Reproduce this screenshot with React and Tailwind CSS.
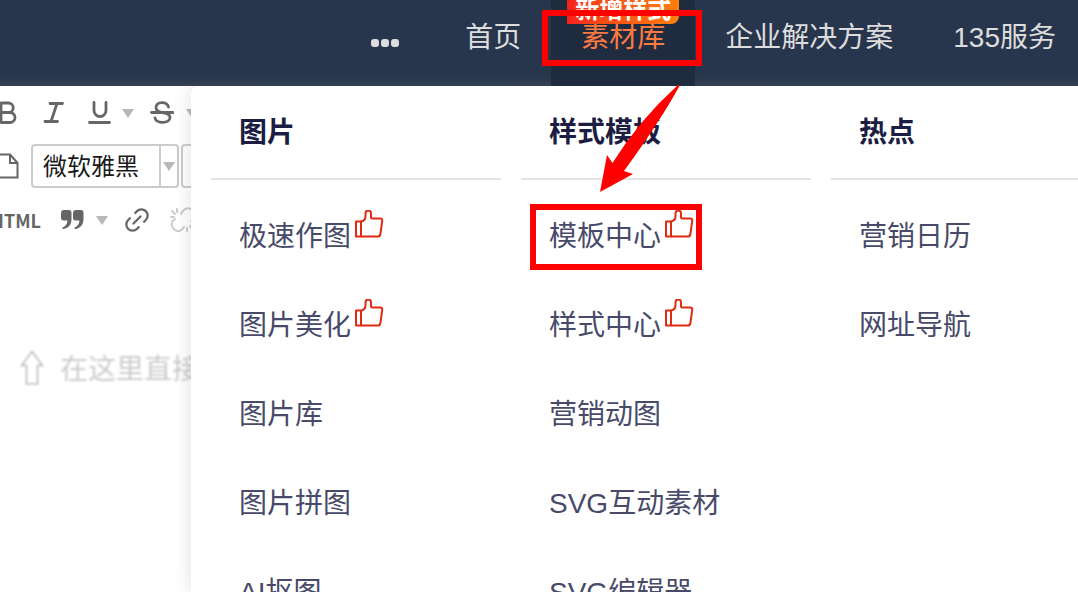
import React, { useState } from 'react';
import { Link2 } from 'lucide-react';

const navItems = [
  { label: '首页' },
  { label: '素材库', badge: '新增样式', active: true },
  { label: '企业解决方案' },
  { label: '135服务' },
];

const menuColumns = [
  {
    title: '图片',
    items: [
      { label: '极速作图', hot: true },
      { label: '图片美化', hot: true },
      { label: '图片库' },
      { label: '图片拼图' },
      { label: 'AI抠图' },
    ],
  },
  {
    title: '样式模板',
    items: [
      { label: '模板中心', hot: true },
      { label: '样式中心', hot: true },
      { label: '营销动图' },
      { label: 'SVG互动素材' },
      { label: 'SVG编辑器' },
    ],
  },
  {
    title: '热点',
    items: [{ label: '营销日历' }, { label: '网址导航' }],
  },
];

const formatIcons = {
  bold: 'M7 2H14.5A4.700 4.700 0 0 1 14.5 11.500H7ZM7 11.500H16A5 5 0 0 1 16 21.500H7Z',
  italic: 'M8 2.500H20.500M3 20.500H15.500M15 2.500L9 20.500',
  underline: 'M6 1.500V9.500A6 6 0 0 0 18 9.500V1.500M1.500 21.500H21.500',
  strike: 'M18.500 6C17 0 6 0 6 6.500C6 10 9 11 12 11.500C16 12 20 13 20 16.500C20 23 6 23 5 17M1.500 11.500H23',
};

function FormatIcon({ name }) {
  return (
    <svg width="24" height="24" viewBox="0 0 24 24" fill="none" stroke="#666" strokeWidth="2.8" strokeLinecap="round" strokeLinejoin="round">
      <path d={formatIcons[name]} />
    </svg>
  );
}

function ThumbIcon() {
  return (
    <svg className="mb-6 ml-1 shrink-0" width="29" height="30" viewBox="0 0 29 30" fill="none" stroke="#e02a12" strokeWidth="2" strokeLinejoin="round">
      <path d="M1 11.500H6V26.500H1Z" />
      <path d="M6 11.500C9.500 11 10.500 9 10.500 6V3.500C10.500 -.5 16 -.5 16 3.500V7Q16 8.500 17.500 8.500H25.500Q27.500 8.500 27.200 11L25.400 24Q25 26.500 23 26.500H6" />
    </svg>
  );
}

function Caret() {
  return (
    <svg className="shrink-0" width="12" height="9" viewBox="0 0 12 9" fill="#b8b8b8">
      <path d="M0 0H12L6 9Z" />
    </svg>
  );
}

function PageIcon() {
  return (
    <svg className="shrink-0" width="24" height="26" viewBox="0 0 24 26" fill="none" stroke="#666" strokeWidth="2">
      <path d="M1 1.5H15L22.500 10V24.500H1Z" />
      <path d="M15 1.5V10H22.500" />
    </svg>
  );
}

function QuoteIcon() {
  const mark = 'M3 0H8Q10.500 0 10.500 3V9C10.500 15 7 18.500 2 19Q.5 18.500 2 17.200Q6 15.500 6.500 10.500H3Q0 10.500 0 8V3Q0 0 3 0Z';
  return (
    <svg width="23" height="20" viewBox="0 0 23 20" fill="#666">
      <path d={mark} />
      <path d={mark} transform="translate(12 0)" />
    </svg>
  );
}

function UnlinkIcon() {
  return (
    <svg width="28" height="28" viewBox="0 0 28 28" fill="none" stroke="#ccc" strokeWidth="2" strokeLinecap="round">
      <path d="M5 13C0 16 1 21 5 24C8 26 12 25 14 21" />
      <path d="M11 8C14 2 18 1 22 4C26 7 25 12 21 15" />
      <path d="M7 3V6M2 5L5 8M1 11H4M17 22V25M20 20L23 23M22 17H25" />
    </svg>
  );
}

function ToolButton({ label, children }) {
  return (
    <button type="button" aria-label={label} className="flex shrink-0 items-center text-[#666]">
      {children}
    </button>
  );
}

function Header() {
  return (
    <header className="h-[86px] overflow-hidden bg-[#28364d]">
      <nav className="-mr-2 flex h-full justify-end bg-linear-to-b from-transparent from-90% to-[#344152]">
        <button type="button" aria-label="更多" className="mr-9 flex items-center gap-[2px]">
          <span className="h-2 w-2 rounded-[3px] bg-[#ddd]" />
          <span className="h-2 w-2 rounded-[3px] bg-[#ddd]" />
          <span className="h-2 w-2 rounded-[3px] bg-[#ddd]" />
        </button>
        {navItems.map((item) => (
          <a
            key={item.label}
            href="#"
            className={
              item.active
                ? 'relative flex shrink-0 items-center bg-[#1f2c40] px-[30px] pb-[10px] text-[#ff7a40]'
                : 'flex shrink-0 items-center px-[30px] pb-[10px] text-[#ddd]'
            }
          >
            {item.label}
            {item.badge && (
              <span className="absolute -top-2 left-4 flex h-8 items-center rounded-br-lg bg-linear-to-r from-[#f5201a] to-[#ff7f0c] px-2 pt-1 text-2xl font-bold whitespace-nowrap text-white">
                {item.badge}
              </span>
            )}
          </a>
        ))}
      </nav>
    </header>
  );
}

function Editor() {
  const [font, setFont] = useState('微软雅黑');

  return (
    <section>
      <div className="-ml-[6px] flex h-[54px] items-center">
        <ToolButton label="加粗"><FormatIcon name="bold" /></ToolButton>
        <div className="ml-6"><ToolButton label="斜体"><FormatIcon name="italic" /></ToolButton></div>
        <div className="ml-[22px] flex items-center gap-[10px]">
          <ToolButton label="下划线"><FormatIcon name="underline" /></ToolButton>
          <Caret />
        </div>
        <div className="ml-4 flex items-center gap-3">
          <ToolButton label="删除线"><FormatIcon name="strike" /></ToolButton>
          <Caret />
        </div>
      </div>

      <div className="-ml-[5px] flex h-[52px] items-center">
        <ToolButton label="新建"><PageIcon /></ToolButton>
        <div className="ml-3 flex h-11 w-[148px] shrink-0 items-center rounded-sm border-2 border-[#ccc]">
          <select
            aria-label="字体"
            value={font}
            onChange={(e) => setFont(e.target.value)}
            className="h-full w-[126px] appearance-none pt-[2px] pl-[10px] text-2xl text-[#1a1a1a]"
          >
            <option>微软雅黑</option>
            <option>宋体</option>
          </select>
          <span className="flex h-full flex-1 items-center justify-center border-l-2 border-[#ccc]">
            <Caret />
          </span>
        </div>
        <div className="ml-[2px] h-11 w-20 shrink-0 rounded-sm border-2 border-[#ccc]" />
      </div>

      <div className="-ml-[9px] flex h-14 items-center">
        <button type="button" className="flex w-[50px] shrink-0 justify-end font-['Noto_Sans_CJK_SC'] text-lg font-bold text-[#666]">HTML</button>
        <div className="ml-5 flex items-center gap-3">
          <ToolButton label="引用"><QuoteIcon /></ToolButton>
          <Caret />
        </div>
        <div className="ml-[14px]"><ToolButton label="链接"><Link2 size={30} strokeWidth={1.8} className="-rotate-45" /></ToolButton></div>
        <div className="ml-[18px]"><ToolButton label="取消链接"><UnlinkIcon /></ToolButton></div>
      </div>

      <div className="mt-[98px] ml-5 flex items-center gap-4 whitespace-nowrap text-[#ccc] blur-[1px]">
        <svg className="shrink-0" width="24" height="36" viewBox="0 0 24 36" fill="none" stroke="#bbb" strokeWidth="1.6">
          <path d="M12 1.500L22.500 15.500H17.500V34H6.500V15.500H1.500Z" />
        </svg>
        <p className="pt-1">在这里直接输入</p>
      </div>
    </section>
  );
}

function MegaMenu() {
  return (
    <div className="absolute inset-y-0 right-0 left-[191px] rounded-tl-lg bg-white shadow-[0_0_20px_rgba(0,0,0,0.12)]">
      <div className="flex gap-5 pl-5">
        {menuColumns.map((col) => (
          <div key={col.title} className="w-[290px] shrink-0">
            <h2 className="flex h-[94px] items-center border-b-2 border-[#e4e4e4] pt-[2px] pl-7 font-bold text-[#1b1d42]">
              {col.title}
            </h2>
            <ul className="pt-3">
              {col.items.map((item) => (
                <li key={item.label}>
                  <a href="#" className="flex h-[89px] items-center pl-7 text-[#484a69]">
                    {item.label}
                    {item.hot && <ThumbIcon />}
                  </a>
                </li>
              ))}
            </ul>
          </div>
        ))}
      </div>
    </div>
  );
}

// Red frames and the arrow that lead from the nav entry to the menu entry
function Annotations() {
  return (
    <div className="pointer-events-none">
      <div className="absolute top-[10px] right-[376px] h-14 w-40 border-6 border-[#ff0000]" />
      <div className="absolute top-[204px] left-[530px] h-[66px] w-[172px] border-6 border-[#ff0000]" />
      <svg className="absolute top-[84px] left-[598px]" width="84" height="110" viewBox="0 0 84 110" fill="#ff0000">
        <path d="M2 108L9 71L14.500 79Q42 35 80 1L82 1Q63 36 26 87L35 90Z" />
      </svg>
    </div>
  );
}

export default function App() {
  return (
    <div className="relative flex h-screen flex-col overflow-hidden bg-white font-['Liberation_Sans','Noto_Sans_CJK_SC',sans-serif] text-[28px] leading-10">
      <Header />
      <main className="relative flex-1 overflow-hidden">
        <Editor />
        <MegaMenu />
      </main>
      <Annotations />
    </div>
  );
}
